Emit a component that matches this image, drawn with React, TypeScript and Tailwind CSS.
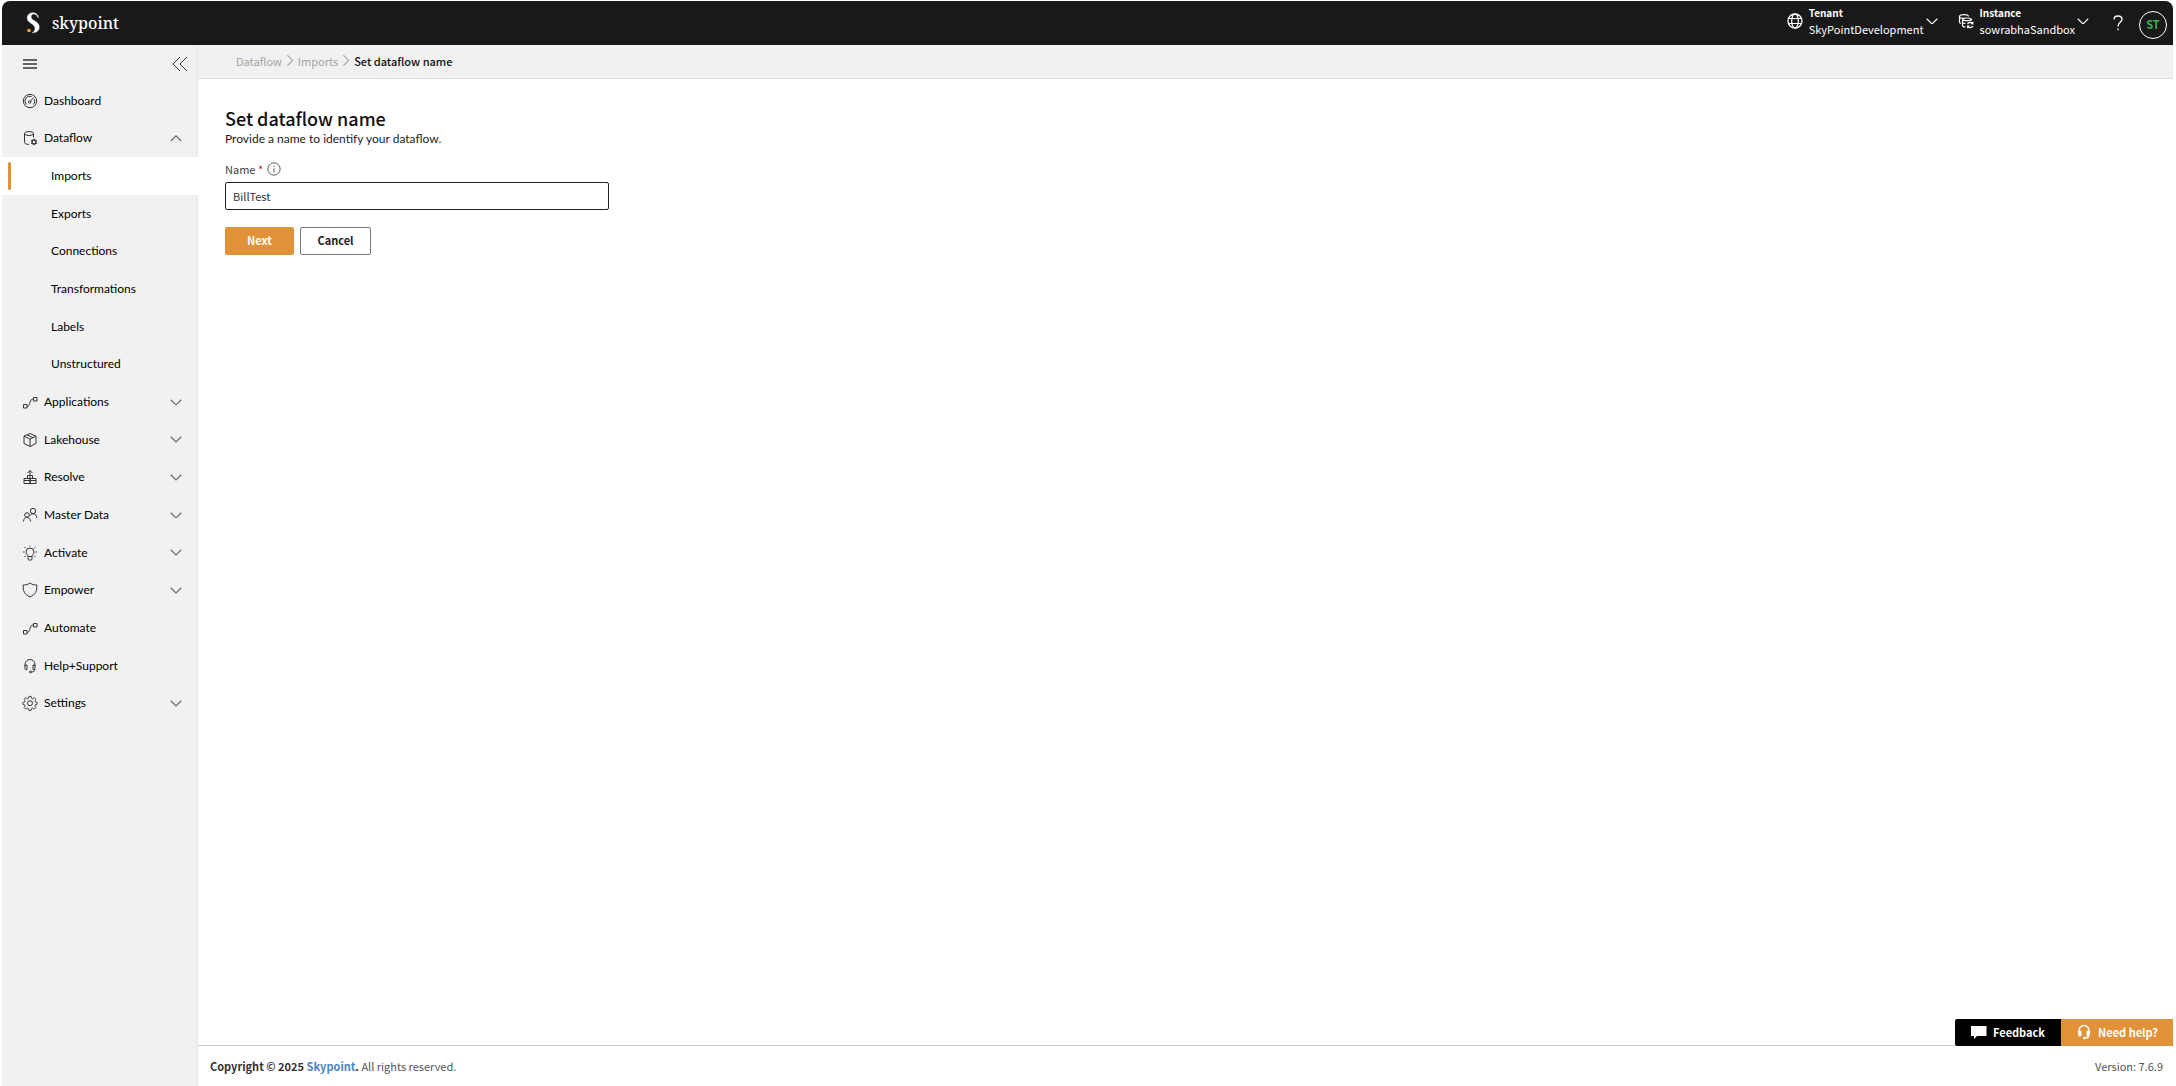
import type { ReactNode } from "react"

const chevronDown = "M1 1l7 7 7-7"
const chevronUp = "M1 8l7-7 7 7"

function Icon({ children, className = "size-4" }: { children: ReactNode; className?: string }) {
  return (
    <svg
      viewBox="0 0 16 16"
      className={`shrink-0 ${className}`}
      fill="none"
      stroke="currentColor"
      strokeWidth="1"
      aria-hidden="true"
    >
      {children}
    </svg>
  )
}

function Chevron({ up = false, className }: { up?: boolean; className: string }) {
  return (
    <svg viewBox="0 0 16 9" className={`shrink-0 ${className}`} fill="none" stroke="currentColor" strokeWidth="1.5" aria-hidden="true">
      <path d={up ? chevronUp : chevronDown} />
    </svg>
  )
}

const flowIcon = (
  <Icon>
    <path d="M1.500 10.500h3.500v3.500H1.500zM11.500 3.500h3.500V7h-3.500zM5 12.500c1.500 0 2-.8 2.700-3.200L8.500 7c.7-1.700 1.500-2 3-2" />
  </Icon>
)

const icons: Record<string, ReactNode> = {
  Dashboard: (
    <Icon>
      <circle cx="8" cy="8" r="6.700" />
      <path d="M4.500 11.500A4.800 4.800 0 0 1 9.500 3.500M12.400 6.200a4.800 4.800 0 0 1-.9 5.300M8.200 8.600l3.600-4.200" />
      <circle cx="7.700" cy="9" r="1.200" />
    </Icon>
  ),
  Dataflow: (
    <Icon>
      <ellipse cx="7" cy="3.500" rx="4.500" ry="2" />
      <path d="M2.500 3.500v9c0 1 1.800 1.900 4.500 1.900M11.500 3.500v4" />
      <circle cx="12" cy="12" r="2" strokeWidth="1.300" />
      <path d="M12 8.800v1.200M12 14v1.200M9.200 10.400l1.100.6M13.700 13l1.100.6M9.200 13.600l1.100-.6M13.700 11l1.100-.6" />
    </Icon>
  ),
  Applications: flowIcon,
  Lakehouse: (
    <Icon>
      <path d="M8 1.500l6 2.700v7.300L8 14.500l-6-3V4.200zM2 4.200l6 2.900 6-2.900M8 7.100v7.400M5 2.900l6 2.800" />
    </Icon>
  ),
  Resolve: (
    <Icon>
      <path d="M2 9.500h6v5H2zM8 9.500h6v5H8zM2 11.500h12M8 9.500V1.500M5.500 4L8 1.500 10.500 4M5.500 9.500V6.500h5v3" />
    </Icon>
  ),
  "Master Data": (
    <Icon>
      <circle cx="5" cy="8" r="2.300" />
      <circle cx="11" cy="4" r="2.700" />
      <path d="M1.500 14.500c0-5.500 7-5.500 7 0M7.800 8.800c2-3.500 7-2.500 7 2.200" />
    </Icon>
  ),
  Activate: (
    <Icon>
      <path d="M6 11.500c0-1.500-2-2.200-2-4.500a4 4 0 0 1 8 0c0 2.300-2 3-2 4.500zM6 11.500V14a1 1 0 0 0 1 1h2a1 1 0 0 0 1-1v-2.500M8 .5v1M1 7h1.500M13.500 7H15M2.500 2l1.200 1.200M13.500 2l-1.200 1.200M2.500 12l1.200-1.200M13.500 12l-1.200-1.200" />
    </Icon>
  ),
  Empower: (
    <Icon>
      <path d="M8 1C6 2.500 4 3 1.200 3c-.4 6 1.300 9.500 6.800 12 5.500-2.500 7.200-6 6.800-12C12 3 10 2.500 8 1z" />
    </Icon>
  ),
  Automate: flowIcon,
  "Help+Support": (
    <Icon>
      <path d="M3 8V6.500a5 5 0 0 1 10 0V8M3 7h2v4.500H4c-.6 0-1-.4-1-1zM13 7h-2v4.500h1c.6 0 1-.4 1-1zM12.800 11c0 2-1.300 3-3.300 3" />
      <circle cx="8.500" cy="14" r="1" />
    </Icon>
  ),
  Settings: (
    <Icon>
      <path d="M6.700 1h2.600l.4 2 1.300.6 1.800-1.200 1.800 1.800-1.100 1.800.5 1.300 2 .5v2l-2 .5-.5 1.300 1.100 1.800-1.800 1.800-1.800-1.200-1.300.6-.4 1.900H6.700l-.4-1.900L5 14l-1.800 1.200-1.800-1.800 1.100-1.800L2 10.300l-2-.5v-2l2-.5L2.500 6 1.400 4.200l1.800-1.800L5 3.600 6.300 3z" transform="translate(.8 .5) scale(.9)" />
      <circle cx="8" cy="8.200" r="2.500" />
    </Icon>
  ),
}

type Item = { label: string; open?: boolean; closed?: boolean; sub?: boolean; active?: boolean }

const items: Item[] = [
  { label: "Dashboard" },
  { label: "Dataflow", open: true },
  { label: "Imports", sub: true, active: true },
  { label: "Exports", sub: true },
  { label: "Connections", sub: true },
  { label: "Transformations", sub: true },
  { label: "Labels", sub: true },
  { label: "Unstructured", sub: true },
  { label: "Applications", closed: true },
  { label: "Lakehouse", closed: true },
  { label: "Resolve", closed: true },
  { label: "Master Data", closed: true },
  { label: "Activate", closed: true },
  { label: "Empower", closed: true },
  { label: "Automate" },
  { label: "Help+Support" },
  { label: "Settings", closed: true },
]

function NavItem({ label, open, closed, sub, active }: Item) {
  return (
    <a
      href="#"
      aria-current={active ? "page" : undefined}
      className={`flex items-center font-['Lato',sans-serif] text-[12px] leading-4 text-black ${active ? "bg-white" : ""}`}
    >
      {sub ? (
        <>
          <span className={`ml-1.5 h-7 w-[3px] rounded-sm ${active ? "bg-[#e19138]" : ""}`} />
          <span className="ml-10">{label}</span>
        </>
      ) : (
        <>
          <span className="ml-5 text-[#333]">{icons[label]}</span>
          <span className="ml-1.5 grow">{label}</span>
          {(open || closed) && <Chevron up={open} className="mr-4 w-3 text-[#666]" />}
        </>
      )}
    </a>
  )
}

function Header() {
  return (
    <header className="flex h-11 shrink-0 items-center rounded-t-lg bg-[#191919] text-white">
      <svg viewBox="0 0 14 22" className="ml-6 h-[22px] w-3.5" aria-hidden="true">
        <path
          d="M12.500 5.500C12 2.500 10 .7 7.200.7 3.700.7 1.200 2.900 1.200 5.900c0 5.300 7.800 5.600 7.800 10.300 0 2.300-1 3.700-2.700 4.500 4 .2 7-2 7-5.700 0-5.900-8.200-6.100-8.200-10 0-2 1-3 2.700-3 2.200 0 3.500 1.400 4 3.500z"
          fill="white"
          stroke="white"
          strokeWidth=".4"
        />
        <circle cx="3" cy="18.500" r="1.800" fill="#f0a52c" />
      </svg>
      <span className="ml-3 grow font-['Noto_Serif','Liberation_Serif',serif] text-[16px] leading-6 font-medium">skypoint</span>

      <button type="button" className="flex items-center pb-1 text-left">
        <Icon className="mr-1.5 size-4">
          <circle cx="8" cy="8" r="7" strokeWidth="1.300" />
          <ellipse cx="8" cy="8" rx="3.300" ry="7" strokeWidth="1.200" />
          <path d="M1.500 5.500h13M1.500 10.500h13" strokeWidth="1.200" />
        </Icon>
        <span className="flex flex-col text-[11px] leading-4">
          <span className="text-[10px] font-bold">Tenant</span>
          <span>SkyPointDevelopment</span>
        </span>
        <Chevron className="ml-0.5 w-3" />
      </button>
      <button type="button" className="ml-5 flex items-center pb-1 text-left">
        <Icon className="mr-1.5 size-4">
          <g strokeWidth="1.200">
            <path d="M3 10.500c-1-.3-1.500-.8-1.500-1.500V3.500C1.500 1 10.500 1 10.500 3.500M1.500 4c1 1.500 3 1.500 5 1" />
            <path d="M13.500 7.500V6.500c0-2-9-2-9 0v6c0 .8 1.200 1.400 3 1.500M4.500 6.500c1.500 1.700 7.500 1.700 9 0M4.500 9.500c1 .8 2 1 3 1" />
            <path d="M9.500 11c1-1.800 4-2.200 5.300-.5V8.800M14.800 10.700h-2M15 13c-1 1.800-4 2.200-5.300.5v1.700M9.700 13.200h2" />
          </g>
        </Icon>
        <span className="flex flex-col text-[11px] leading-4">
          <span className="text-[10px] font-bold">Instance</span>
          <span>sowrabhaSandbox</span>
        </span>
        <Chevron className="ml-0.5 w-3" />
      </button>
      <button type="button" aria-label="Help" className="ml-6">
        <svg viewBox="0 0 10 16" className="h-4 w-2.5" fill="none" stroke="white" strokeWidth="1.300" aria-hidden="true">
          <path d="M1 4.500C1 2.300 2.700 1 5 1s4 1.300 4 3.300C9 7.300 5 7.500 5 11.500M5 13.500v1.700" />
        </svg>
      </button>
      <button
        type="button"
        className="mt-1 mr-1.5 ml-4 size-7 rounded-full border border-white pb-0.5 text-[11px] leading-4 font-bold text-[#3fae55]"
      >
        ST
      </button>
    </header>
  )
}

function Sidebar() {
  return (
    <aside className="flex w-[196px] shrink-0 flex-col border-r-2 border-[#ebebeb] bg-[#f1f1f1]">
      <div className="flex h-[37px] items-center justify-between pr-2 pl-5 text-[#333]">
        <button type="button" aria-label="Menu">
          <Icon>
            <path d="M1 4h14M1 8h14M1 12h14" strokeWidth="1.400" />
          </Icon>
        </button>
        <button type="button" aria-label="Collapse sidebar">
          <Icon>
            <path d="M8 1L1 8l7 7M15 1L8 8l7 7" />
          </Icon>
        </button>
      </div>
      <nav className="-mr-0.5 grid h-[640px] auto-rows-fr">
        {items.map((item) => (
          <NavItem key={item.label} {...item} />
        ))}
      </nav>
    </aside>
  )
}

function Crumbs() {
  return (
    <nav
      aria-label="Breadcrumb"
      className="flex h-[34px] shrink-0 items-center gap-0.5 border-b border-[#dcdcdc] bg-[#f1f1f1] pb-0.5 pl-[38px] text-[11px] leading-4 text-[#a3a3a3]"
    >
      <a href="#">Dataflow</a>
      <Chevron className="w-3 -rotate-90" />
      <a href="#">Imports</a>
      <Chevron className="w-3 -rotate-90" />
      <span aria-current="page" className="font-medium text-[#111]">
        Set dataflow name
      </span>
    </nav>
  )
}

function NameForm() {
  return (
    <form className="flex flex-col items-start px-[27px] pt-[27px]" onSubmit={(e) => e.preventDefault()}>
      <h1 className="text-lg leading-6 font-medium text-[#111]">Set dataflow name</h1>
      <p className="mt-px font-['Lato',sans-serif] text-[12px] leading-4 text-[#222]">
        Provide a name to identify your dataflow.
      </p>
      <div className="mt-3.5 flex items-center text-[11px] leading-4 text-[#444]">
        <label htmlFor="name">
          Name <span className="text-[#a4262c]">*</span>
        </label>
        <Icon className="ml-1 size-3.5">
          <circle cx="8" cy="8" r="7" />
          <path d="M8 7v5M8 4v1.500" />
        </Icon>
      </div>
      <input
        id="name"
        defaultValue="BillTest"
        className="mt-[5px] h-7 w-96 rounded-xs border border-[#222] px-[7px] text-[11px] leading-4 text-[#333]"
      />
      <div className="mt-[17px] flex gap-1.5 text-[11px] leading-4 font-bold">
        <button type="submit" className="h-7 w-[69px] rounded-xs bg-[#e19138] pb-0.5 text-white">
          Next
        </button>
        <button type="button" className="h-7 w-[71px] rounded-xs border border-[#777] pb-0.5 text-[#222]">
          Cancel
        </button>
      </div>
    </form>
  )
}

export default function App() {
  return (
    <div className="flex min-h-screen flex-col bg-white pt-px pr-[3px] pl-0.5 font-['Noto_Sans_CJK_JP',sans-serif]">
      <Header />
      <div className="flex grow">
        <Sidebar />
        <div className="flex grow flex-col">
          <Crumbs />
          <main className="grow">
            <NameForm />
          </main>
          <footer className="relative flex h-[41px] shrink-0 items-center justify-between border-t border-[#ccced4] pr-2.5 pl-3 text-[11px] leading-4 text-[#555]">
            <p>
              <span className="font-bold text-[#333]">
                Copyright © 2025{" "}
                <a href="#" className="text-[#4a84c4]">
                  Skypoint
                </a>
                .
              </span>{" "}
              All rights reserved.
            </p>
            <p>Version: 7.6.9</p>
            <div className="absolute right-0 bottom-10 flex h-[27px] text-[11px] leading-4 font-bold text-white">
              <button type="button" className="flex w-[106px] items-center justify-center gap-1.5 rounded-l-xs bg-black pb-0.5">
                <svg viewBox="0 0 16 14" className="w-4" fill="white" aria-hidden="true">
                  <path d="M0 1h15.500v10H6l-3 3v-3H0z" />
                </svg>
                Feedback
              </button>
              <button type="button" className="flex w-28 items-center justify-center gap-1.5 bg-[#e19138] pb-0.5">
                <Icon>
                  <path d="M3 8V6.500a5 5 0 0 1 10 0V8M12.800 11c0 2-1.300 3-3.300 3" strokeWidth="1.400" />
                  <path d="M2.500 7H5v5H4c-.8 0-1.500-.7-1.500-1.500zM13.500 7H11v5h1c.8 0 1.500-.7 1.500-1.500z" fill="white" />
                  <circle cx="8.500" cy="14" r="1" fill="white" />
                </Icon>
                Need help?
              </button>
            </div>
          </footer>
        </div>
      </div>
    </div>
  )
}
